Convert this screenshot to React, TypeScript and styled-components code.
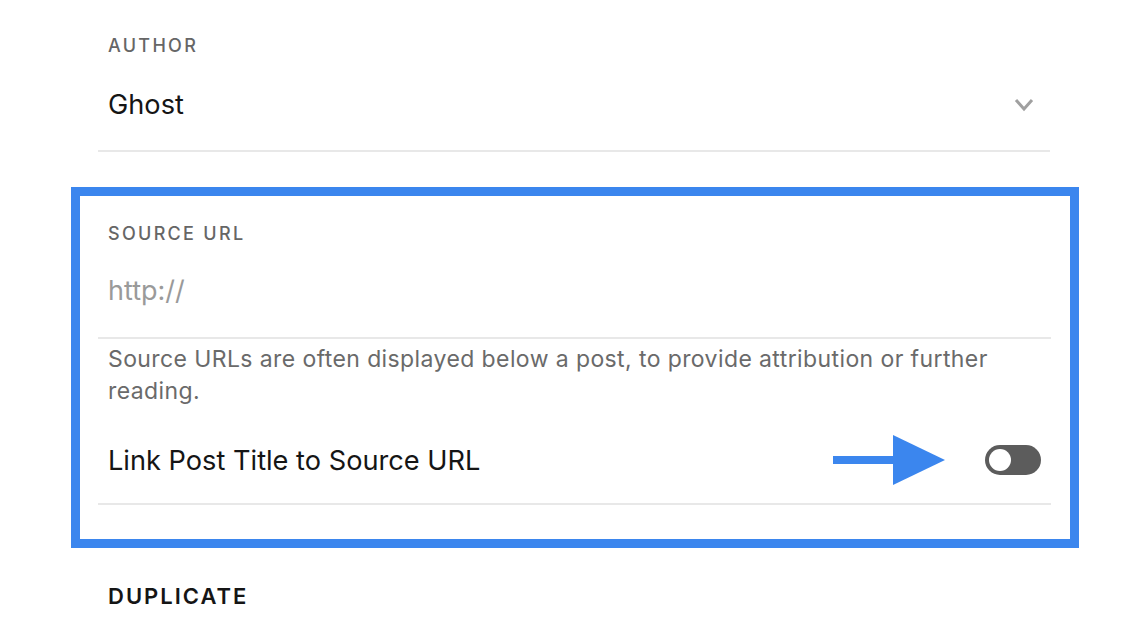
import React from "react"

import styled, { createGlobalStyle } from "styled-components"

const GlobalStyle = createGlobalStyle`
  html, body {
    margin: 0;
    padding: 0;
    background: #fff;
  }
  body {
    font-family: Inter, "Noto Sans", "Liberation Sans", sans-serif;
    -webkit-font-smoothing: antialiased;
  }
`

export default function App() {
  return (
    <>
      <GlobalStyle />
      <Page>
        <Section>
          <Label>Author</Label>
          <SelectRow>
            <Value>Ghost</Value>
            <Chevron viewBox="0 0 20 14">
              <path d="M2 2 L10 11 L18 2" />
            </Chevron>
          </SelectRow>
        </Section>

        <Highlight>
          <Section $top={28}>
            <Label>Source URL</Label>
            <Input>http://</Input>
          </Section>
          <Help>
            Source URLs are often displayed below a post, to provide attribution or further
            reading.
          </Help>
          <ToggleRow>
            <Value>Link Post Title to Source URL</Value>
            <Controls>
              <Arrow viewBox="0 0 112 52">
                <rect x="0" y="22" width="64" height="8" />
                <polygon points="60,1 112,26 60,51" />
              </Arrow>
              <Toggle>
                <Knob />
              </Toggle>
            </Controls>
          </ToggleRow>
        </Highlight>

        <Heading>Duplicate</Heading>
      </Page>
    </>
  )
}

const Page = styled.div`
  width: 952px;
  margin-left: 98px;
  padding-top: 36px;
`

const Section = styled.div<{ $top?: number }>`
  padding: ${(p) => p.$top ?? 0}px 10px 0;
  border-bottom: 2px solid #e8e8e8;
`

const Label = styled.div`
  font-size: 18px;
  line-height: 20px;
  font-weight: 500;
  letter-spacing: 2.3px;
  text-transform: uppercase;
  color: #666;
`

const SelectRow = styled.div`
  display: flex;
  align-items: center;
  justify-content: space-between;
  height: 94px;
  padding-top: 3px;
  box-sizing: border-box;
`

const Value = styled.div`
  font-size: 27.2px;
  color: #151515;
`

const Chevron = styled.svg`
  width: 20px;
  height: 14px;
  margin-right: 6px;
  fill: none;
  stroke: #a0a0a0;
  stroke-width: 3;
`

const Highlight = styled.div`
  margin: 35px -29px 0 -27px;
  padding: 0 19px 34px 18px;
  border: 9px solid #3b86ee;
`

const Input = styled.div`
  display: flex;
  align-items: center;
  height: 93px;
  font-size: 27px;
  color: #9a9a9a;
`

const Help = styled.div`
  padding: 4px 10px 0;
  font-size: 23px;
  line-height: 32px;
  letter-spacing: 0.4px;
  color: #6a6a6a;
`

const ToggleRow = styled.div`
  display: flex;
  align-items: center;
  justify-content: space-between;
  height: 98px;
  padding: 10px 10px 0;
  box-sizing: border-box;
  border-bottom: 2px solid #e8e8e8;
`

const Controls = styled.div`
  display: flex;
  align-items: center;
  gap: 40px;
`

const Arrow = styled.svg`
  width: 112px;
  height: 52px;
  fill: #3b86ee;
`

const Toggle = styled.div`
  display: flex;
  align-items: center;
  width: 56px;
  height: 30px;
  padding: 0 4px;
  box-sizing: border-box;
  border-radius: 15px;
  background: #5c5c5c;
`

const Knob = styled.div`
  width: 22px;
  height: 22px;
  border-radius: 50%;
  background: #fff;
`

const Heading = styled.div`
  margin-top: 35px;
  padding-left: 10px;
  font-size: 22px;
  font-weight: 600;
  letter-spacing: 2px;
  text-transform: uppercase;
  color: #151515;
`
